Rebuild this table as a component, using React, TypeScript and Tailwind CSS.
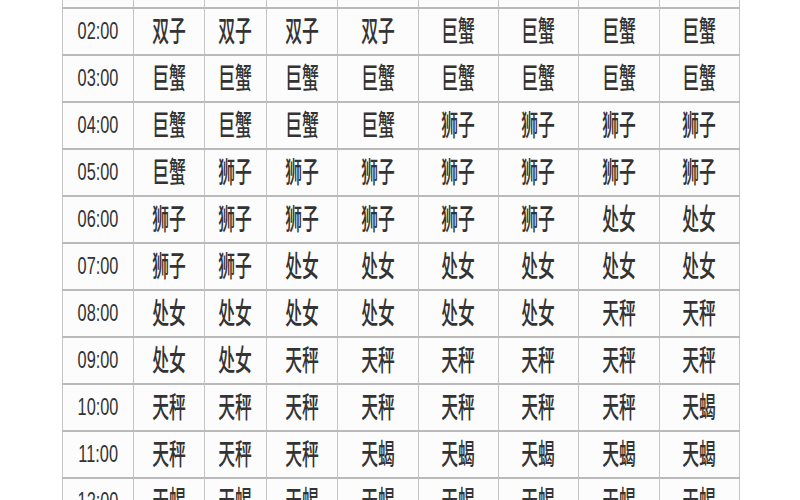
import React from "react";

const cols = [71, 71, 62, 71, 81, 80, 80, 81, 80];

const rows: [string, string[]][] = [
  ["02:00", ["双子", "双子", "双子", "双子", "巨蟹", "巨蟹", "巨蟹", "巨蟹"]],
  ["03:00", ["巨蟹", "巨蟹", "巨蟹", "巨蟹", "巨蟹", "巨蟹", "巨蟹", "巨蟹"]],
  ["04:00", ["巨蟹", "巨蟹", "巨蟹", "巨蟹", "狮子", "狮子", "狮子", "狮子"]],
  ["05:00", ["巨蟹", "狮子", "狮子", "狮子", "狮子", "狮子", "狮子", "狮子"]],
  ["06:00", ["狮子", "狮子", "狮子", "狮子", "狮子", "狮子", "处女", "处女"]],
  ["07:00", ["狮子", "狮子", "处女", "处女", "处女", "处女", "处女", "处女"]],
  ["08:00", ["处女", "处女", "处女", "处女", "处女", "处女", "天秤", "天秤"]],
  ["09:00", ["处女", "处女", "天秤", "天秤", "天秤", "天秤", "天秤", "天秤"]],
  ["10:00", ["天秤", "天秤", "天秤", "天秤", "天秤", "天秤", "天秤", "天蝎"]],
  ["11:00", ["天秤", "天秤", "天秤", "天蝎", "天蝎", "天蝎", "天蝎", "天蝎"]],
  ["12:00", ["天蝎", "天蝎", "天蝎", "天蝎", "天蝎", "天蝎", "天蝎", "天蝎"]],
];

const cell =
  "border-x border-y-2 border-x-[#c4c4c4] border-y-[#bababa] p-0 text-center";

function App() {
  return (
    <main className="h-[500px] w-[800px] overflow-hidden bg-white antialiased">
      <table className="ml-[62px] border-collapse table-fixed bg-[#fcfcfc] text-[#333]">
        <colgroup>
          {cols.map((w, i) => (
            <col key={i} style={{ width: w }} />
          ))}
        </colgroup>
        <tbody>
          {/* top of the previous row, cut off by the frame */}
          <tr className="h-[8px]">
            {cols.map((_, i) => (
              <td key={i} className="border-x border-b-2 border-x-[#c4c4c4] border-b-[#bababa] p-0" />
            ))}
          </tr>
          {rows.map(([time, signs]) => (
            <tr key={time} className="h-[47px]">
              <td className={cell}>
                <span className="inline-block scale-x-[0.68] font-['Liberation_Sans',sans-serif] text-[24px] leading-none">
                  {time}
                </span>
              </td>
              {signs.map((s, i) => (
                <td key={i} className={cell}>
                  <span className="inline-block scale-x-[0.58] font-['Noto_Sans_CJK_SC',sans-serif] text-[29px] font-medium leading-none">
                    {s}
                  </span>
                </td>
              ))}
            </tr>
          ))}
        </tbody>
      </table>
    </main>
  );
}

export default App;
